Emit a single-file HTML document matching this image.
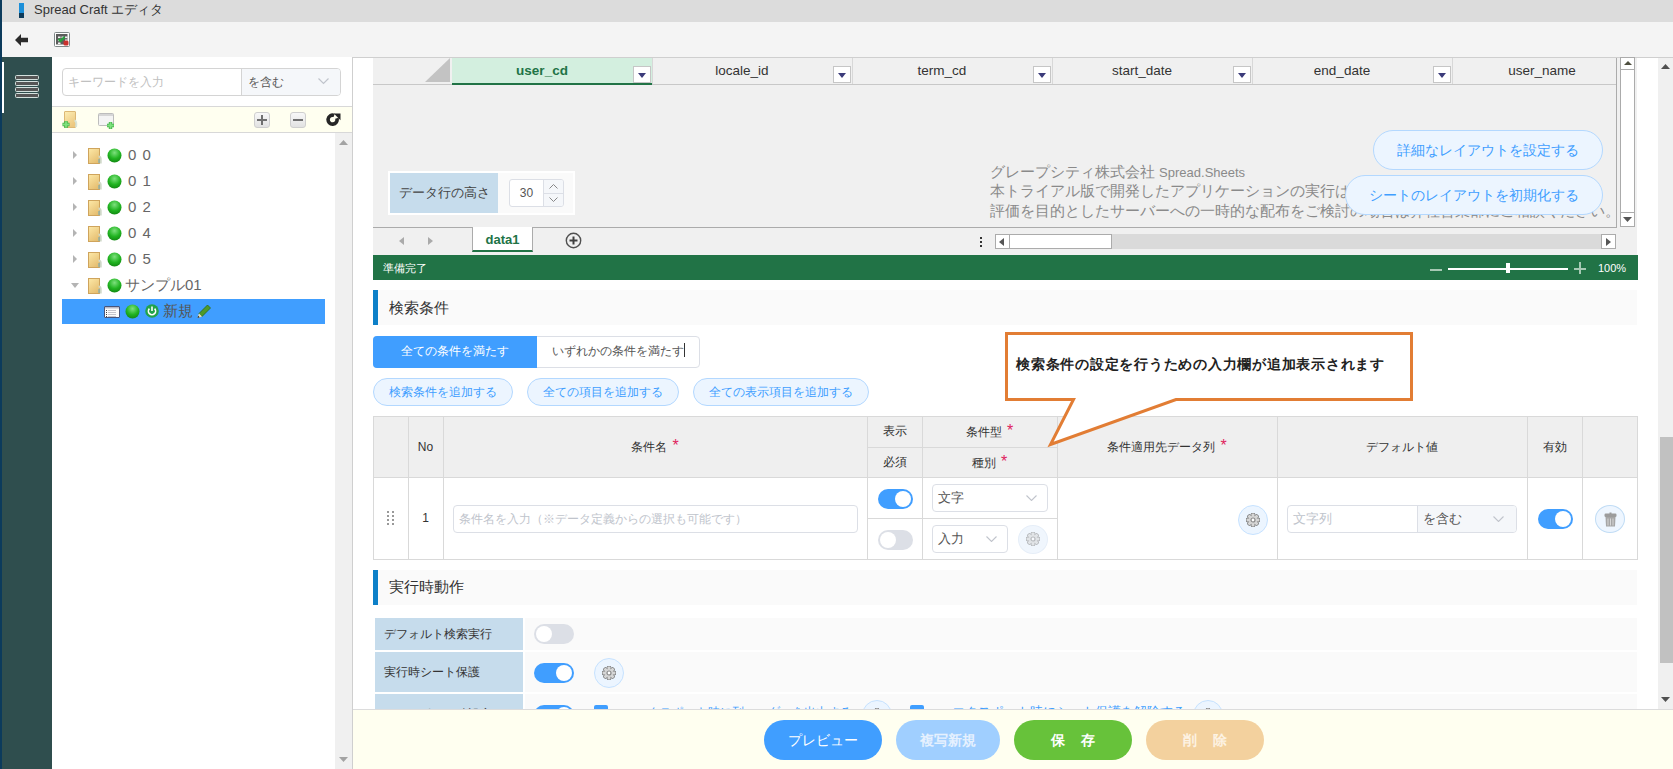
<!DOCTYPE html>
<html><head><meta charset="utf-8">
<style>
*{box-sizing:border-box;margin:0;padding:0}
html,body{width:1673px;height:769px;overflow:hidden;background:#fff;font-family:"Liberation Sans",sans-serif;color:#333}
.a{position:absolute}
.t{white-space:nowrap}
</style></head><body>
<!-- navy stripe -->
<div class="a" style="left:0;top:0;width:2px;height:769px;background:#0c3b5c"></div>
<!-- title bar -->
<div class="a" style="left:2px;top:0;width:1671px;height:22px;background:#dcdcdc"></div>
<div class="a" style="left:19px;top:3px;width:5px;height:10px;background:#1c8fd9"></div>
<div class="a" style="left:19px;top:13px;width:5px;height:5px;background:#0d3b5b"></div>
<div class="a t" style="left:34px;top:1px;font-size:13px;line-height:18px;color:#333">Spread Craft エディタ</div>
<!-- toolbar -->
<div class="a" style="left:2px;top:22px;width:1671px;height:36px;background:#f4f4f4;border-bottom:1px solid #cfcfcf"></div>

<svg class="a" style="left:15px;top:34px" width="13" height="12" viewBox="0 0 13 12"><path d="M0 6 L6 0 L6 3.8 L13 3.8 L13 8.2 L6 8.2 L6 12 Z" fill="#2b2b2b"/></svg>
<svg class="a" style="left:54px;top:32px" width="16" height="15" viewBox="0 0 16 15"><rect x="0.5" y="0.5" width="15" height="14" rx="1" fill="#fff" stroke="#7f8888"/><rect x="2" y="2" width="11.5" height="10.5" fill="#5c5c5c"/><g fill="#f2f2f2"><rect x="4" y="4.5" width="2.5" height="1.6"/><rect x="7.5" y="4.5" width="2.5" height="1.6"/><rect x="11" y="4.5" width="2.5" height="1.6"/><rect x="4" y="7.5" width="2.5" height="1.6"/><rect x="11" y="7.5" width="2.5" height="1.6"/><rect x="4" y="10.5" width="2.5" height="1.6"/></g><path d="M4.5 7 L6.5 9 L10.5 5" stroke="#22a33a" stroke-width="2.2" fill="none"/><rect x="9.5" y="8.5" width="5" height="5" rx="1.5" fill="#c9302c"/></svg>

<!-- sidebar -->
<div class="a" style="left:2px;top:57px;width:50px;height:712px;background:#2f4e4e"></div>
<div class="a" style="left:2px;top:62px;width:2px;height:51px;background:#fff"></div>

<div class="a" style="left:15px;top:75px;width:24px;height:5px;background:#555;border:1px solid #d3e0dd;border-radius:1.5px"></div>
<div class="a" style="left:15px;top:81px;width:24px;height:5px;background:#555;border:1px solid #d3e0dd;border-radius:1.5px"></div>
<div class="a" style="left:15px;top:87px;width:24px;height:5px;background:#555;border:1px solid #d3e0dd;border-radius:1.5px"></div>
<div class="a" style="left:15px;top:93px;width:24px;height:5px;background:#555;border:1px solid #d3e0dd;border-radius:1.5px"></div>
<!-- tree panel -->
<div class="a" style="left:52px;top:57px;width:301px;height:712px;background:#fff;border-right:1px solid #cfcfcf"></div>

<div class="a" style="left:62px;top:68px;width:279px;height:28px;border:1px solid #d4d4d4;border-radius:4px;background:#fff;overflow:hidden">
 <div class="a" style="left:178px;top:0;width:100px;height:26px;background:#f5f7fa;border-left:1px solid #d4d4d4"></div>
 <div class="a t" style="left:5px;top:5px;font-size:12px;line-height:16px;color:#c0c0c0">キーワードを入力</div>
 <div class="a t" style="left:185px;top:5px;font-size:12px;line-height:16px;color:#555">を含む</div>
 <svg class="a" style="left:255px;top:9px" width="11" height="7" viewBox="0 0 11 7"><path d="M0.5 0.5 L5.5 5.5 L10.5 0.5" stroke="#c0c4cc" stroke-width="1.2" fill="none"/></svg>
</div>
<div class="a" style="left:52px;top:106px;width:300px;height:27px;background:#fffff0;border-top:1px solid #d8d8d8;border-bottom:1px solid #d8d8d8"></div>
<svg class="a" style="left:62px;top:111px" width="16" height="18" viewBox="0 0 16 18"><defs><linearGradient id="fg3" x1="0" y1="0" x2="0.5" y2="1"><stop offset="0" stop-color="#fdeeb5"/><stop offset="1" stop-color="#ecc880"/></linearGradient></defs><rect x="2.5" y="0.5" width="11" height="16" rx="0.5" fill="url(#fg3)" stroke="#dcb876"/><path d="M12.5 9.5 q2.5 0.5 1.5 6.5" stroke="#d8e4d8" stroke-width="2" fill="none"/><path d="M0.5 13.5 H7.5 M4 10 V17" stroke="#3fae45" stroke-width="3.4"/><path d="M0.8 13.5 H7.2 M4 10.3 V16.7" stroke="#7ee27e" stroke-width="1.8"/></svg>
<svg class="a" style="left:98px;top:112px" width="17" height="18" viewBox="0 0 17 18"><rect x="0.5" y="1.5" width="15" height="12" rx="1" fill="#f4f4f4" stroke="#bdbdbd"/><rect x="1" y="2" width="14" height="2" fill="#d6d6d6"/><path d="M9 13.5 H16 M12.5 10 V17" stroke="#3fae45" stroke-width="3.4"/><path d="M9.3 13.5 H15.7 M12.5 10.3 V16.7" stroke="#7ee27e" stroke-width="1.8"/></svg>
<div class="a" style="left:254px;top:112px;width:16px;height:16px;border:1px solid #cfcfcf;border-radius:3px;background:linear-gradient(#f8f8f8,#e2e2e2)"></div>
<div class="a" style="left:257px;top:119px;width:10px;height:2px;background:#707070"></div>
<div class="a" style="left:261px;top:115px;width:2px;height:10px;background:#707070"></div>
<div class="a" style="left:290px;top:112px;width:16px;height:16px;border:1px solid #cfcfcf;border-radius:3px;background:linear-gradient(#f8f8f8,#e2e2e2)"></div>
<div class="a" style="left:293px;top:119px;width:10px;height:2px;background:#707070"></div>
<svg class="a" style="left:326px;top:112px" width="15" height="15" viewBox="0 0 15 15"><path d="M10.9 6.3 A4.5 4.5 0 1 1 8.2 3.4" stroke="#262626" stroke-width="3.6" fill="none"/><path d="M14.5 1.5 L14.5 8.2 L7.8 1.5 Z" fill="#262626"/></svg>
<div class="a" style="left:335px;top:133px;width:17px;height:636px;background:#f0f0f0"></div>
<svg class="a" style="left:339px;top:140px" width="9" height="5" viewBox="0 0 9 5"><path d="M0 5 L4.5 0 L9 5 Z" fill="#a3a3a3"/></svg>
<svg class="a" style="left:339px;top:757px" width="9" height="5" viewBox="0 0 9 5"><path d="M0 0 L4.5 5 L9 0 Z" fill="#a3a3a3"/></svg>
<svg class="a" style="left:72px;top:151px" width="6" height="8" viewBox="0 0 6 8"><path d="M1 0 L5 4 L1 8 Z" fill="#b4b4b4"/></svg><svg class="a" style="left:88px;top:148px" width="14" height="16" viewBox="0 0 14 16"><defs><linearGradient id="fg2" x1="0" y1="0" x2="0.6" y2="1"><stop offset="0" stop-color="#fde9a8"/><stop offset="1" stop-color="#e6bf72"/></linearGradient></defs><rect x="0.5" y="0.5" width="11" height="15" fill="url(#fg2)" stroke="#cfa45c"/><path d="M10.5 8.5 q2.5 0 2.2 3.5 v3.5" stroke="#cfd8c8" stroke-width="2" fill="none"/><path d="M11 11 v4" stroke="#6aa9bb" stroke-width="1"/></svg><svg class="a" style="left:107px;top:148px" width="15" height="15" viewBox="0 0 15 15"><defs><radialGradient id="bg1" cx="0.5" cy="0.3" r="0.7"><stop offset="0" stop-color="#7de07d"/><stop offset="0.6" stop-color="#21b421"/><stop offset="1" stop-color="#138a13"/></radialGradient></defs><circle cx="7.5" cy="7.5" r="7" fill="url(#bg1)"/></svg><div class="a t" style="left:128px;top:146px;font-size:15px;line-height:18px;color:#666;letter-spacing:1px">0 0</div><svg class="a" style="left:72px;top:177px" width="6" height="8" viewBox="0 0 6 8"><path d="M1 0 L5 4 L1 8 Z" fill="#b4b4b4"/></svg><svg class="a" style="left:88px;top:174px" width="14" height="16" viewBox="0 0 14 16"><defs><linearGradient id="fg2" x1="0" y1="0" x2="0.6" y2="1"><stop offset="0" stop-color="#fde9a8"/><stop offset="1" stop-color="#e6bf72"/></linearGradient></defs><rect x="0.5" y="0.5" width="11" height="15" fill="url(#fg2)" stroke="#cfa45c"/><path d="M10.5 8.5 q2.5 0 2.2 3.5 v3.5" stroke="#cfd8c8" stroke-width="2" fill="none"/><path d="M11 11 v4" stroke="#6aa9bb" stroke-width="1"/></svg><svg class="a" style="left:107px;top:174px" width="15" height="15" viewBox="0 0 15 15"><defs><radialGradient id="bg1" cx="0.5" cy="0.3" r="0.7"><stop offset="0" stop-color="#7de07d"/><stop offset="0.6" stop-color="#21b421"/><stop offset="1" stop-color="#138a13"/></radialGradient></defs><circle cx="7.5" cy="7.5" r="7" fill="url(#bg1)"/></svg><div class="a t" style="left:128px;top:172px;font-size:15px;line-height:18px;color:#666;letter-spacing:1px">0 1</div><svg class="a" style="left:72px;top:203px" width="6" height="8" viewBox="0 0 6 8"><path d="M1 0 L5 4 L1 8 Z" fill="#b4b4b4"/></svg><svg class="a" style="left:88px;top:200px" width="14" height="16" viewBox="0 0 14 16"><defs><linearGradient id="fg2" x1="0" y1="0" x2="0.6" y2="1"><stop offset="0" stop-color="#fde9a8"/><stop offset="1" stop-color="#e6bf72"/></linearGradient></defs><rect x="0.5" y="0.5" width="11" height="15" fill="url(#fg2)" stroke="#cfa45c"/><path d="M10.5 8.5 q2.5 0 2.2 3.5 v3.5" stroke="#cfd8c8" stroke-width="2" fill="none"/><path d="M11 11 v4" stroke="#6aa9bb" stroke-width="1"/></svg><svg class="a" style="left:107px;top:200px" width="15" height="15" viewBox="0 0 15 15"><defs><radialGradient id="bg1" cx="0.5" cy="0.3" r="0.7"><stop offset="0" stop-color="#7de07d"/><stop offset="0.6" stop-color="#21b421"/><stop offset="1" stop-color="#138a13"/></radialGradient></defs><circle cx="7.5" cy="7.5" r="7" fill="url(#bg1)"/></svg><div class="a t" style="left:128px;top:198px;font-size:15px;line-height:18px;color:#666;letter-spacing:1px">0 2</div><svg class="a" style="left:72px;top:229px" width="6" height="8" viewBox="0 0 6 8"><path d="M1 0 L5 4 L1 8 Z" fill="#b4b4b4"/></svg><svg class="a" style="left:88px;top:226px" width="14" height="16" viewBox="0 0 14 16"><defs><linearGradient id="fg2" x1="0" y1="0" x2="0.6" y2="1"><stop offset="0" stop-color="#fde9a8"/><stop offset="1" stop-color="#e6bf72"/></linearGradient></defs><rect x="0.5" y="0.5" width="11" height="15" fill="url(#fg2)" stroke="#cfa45c"/><path d="M10.5 8.5 q2.5 0 2.2 3.5 v3.5" stroke="#cfd8c8" stroke-width="2" fill="none"/><path d="M11 11 v4" stroke="#6aa9bb" stroke-width="1"/></svg><svg class="a" style="left:107px;top:226px" width="15" height="15" viewBox="0 0 15 15"><defs><radialGradient id="bg1" cx="0.5" cy="0.3" r="0.7"><stop offset="0" stop-color="#7de07d"/><stop offset="0.6" stop-color="#21b421"/><stop offset="1" stop-color="#138a13"/></radialGradient></defs><circle cx="7.5" cy="7.5" r="7" fill="url(#bg1)"/></svg><div class="a t" style="left:128px;top:224px;font-size:15px;line-height:18px;color:#666;letter-spacing:1px">0 4</div><svg class="a" style="left:72px;top:255px" width="6" height="8" viewBox="0 0 6 8"><path d="M1 0 L5 4 L1 8 Z" fill="#b4b4b4"/></svg><svg class="a" style="left:88px;top:252px" width="14" height="16" viewBox="0 0 14 16"><defs><linearGradient id="fg2" x1="0" y1="0" x2="0.6" y2="1"><stop offset="0" stop-color="#fde9a8"/><stop offset="1" stop-color="#e6bf72"/></linearGradient></defs><rect x="0.5" y="0.5" width="11" height="15" fill="url(#fg2)" stroke="#cfa45c"/><path d="M10.5 8.5 q2.5 0 2.2 3.5 v3.5" stroke="#cfd8c8" stroke-width="2" fill="none"/><path d="M11 11 v4" stroke="#6aa9bb" stroke-width="1"/></svg><svg class="a" style="left:107px;top:252px" width="15" height="15" viewBox="0 0 15 15"><defs><radialGradient id="bg1" cx="0.5" cy="0.3" r="0.7"><stop offset="0" stop-color="#7de07d"/><stop offset="0.6" stop-color="#21b421"/><stop offset="1" stop-color="#138a13"/></radialGradient></defs><circle cx="7.5" cy="7.5" r="7" fill="url(#bg1)"/></svg><div class="a t" style="left:128px;top:250px;font-size:15px;line-height:18px;color:#666;letter-spacing:1px">0 5</div><svg class="a" style="left:71px;top:283px" width="8" height="5" viewBox="0 0 8 5"><path d="M0 0 L8 0 L4 5 Z" fill="#b4b4b4"/></svg><svg class="a" style="left:88px;top:278px" width="14" height="16" viewBox="0 0 14 16"><defs><linearGradient id="fg2" x1="0" y1="0" x2="0.6" y2="1"><stop offset="0" stop-color="#fde9a8"/><stop offset="1" stop-color="#e6bf72"/></linearGradient></defs><rect x="0.5" y="0.5" width="11" height="15" fill="url(#fg2)" stroke="#cfa45c"/><path d="M10.5 8.5 q2.5 0 2.2 3.5 v3.5" stroke="#cfd8c8" stroke-width="2" fill="none"/><path d="M11 11 v4" stroke="#6aa9bb" stroke-width="1"/></svg><svg class="a" style="left:107px;top:278px" width="15" height="15" viewBox="0 0 15 15"><defs><radialGradient id="bg1" cx="0.5" cy="0.3" r="0.7"><stop offset="0" stop-color="#7de07d"/><stop offset="0.6" stop-color="#21b421"/><stop offset="1" stop-color="#138a13"/></radialGradient></defs><circle cx="7.5" cy="7.5" r="7" fill="url(#bg1)"/></svg><div class="a t" style="left:125px;top:276px;font-size:15px;line-height:18px;color:#666">サンプル01</div><div class="a" style="left:62px;top:299px;width:263px;height:25px;background:#409eff"></div><svg class="a" style="left:104px;top:306px" width="16" height="12" viewBox="0 0 16 12"><rect x="0.5" y="0.5" width="15" height="11" rx="0.5" fill="#fbfbfb" stroke="#48557a"/><rect x="1" y="1" width="14" height="1.5" fill="#b9b9c6"/><rect x="2" y="4" width="1" height="1" fill="#444"/><rect x="4" y="4" width="8" height="1" fill="#c4c4cc"/><rect x="2" y="6" width="1" height="1" fill="#444"/><rect x="4" y="6" width="8" height="1" fill="#c4c4cc"/><rect x="2" y="8" width="1" height="1" fill="#444"/><rect x="4" y="8" width="8" height="1" fill="#c4c4cc"/><rect x="2" y="10" width="1" height="1" fill="#444"/><rect x="4" y="10" width="8" height="1" fill="#c4c4cc"/></svg><svg class="a" style="left:125px;top:304px" width="15" height="15" viewBox="0 0 15 15"><defs><radialGradient id="bg1" cx="0.5" cy="0.3" r="0.7"><stop offset="0" stop-color="#7de07d"/><stop offset="0.6" stop-color="#21b421"/><stop offset="1" stop-color="#138a13"/></radialGradient></defs><circle cx="7.5" cy="7.5" r="7" fill="url(#bg1)"/></svg><svg class="a" style="left:145px;top:304px" width="14" height="14" viewBox="0 0 14 14"><circle cx="7" cy="7" r="6.8" fill="#23a34a"/><path d="M4.4 4.6 A3.6 3.6 0 1 0 9.6 4.6" stroke="#fff" stroke-width="1.6" fill="none"/><path d="M7 2.5 V7" stroke="#fff" stroke-width="1.6"/></svg><div class="a t" style="left:163px;top:302px;font-size:15px;line-height:18px;color:#555">新規</div><svg class="a" style="left:196px;top:303px" width="16" height="16" viewBox="0 0 16 16"><path d="M3 10.5 L11.5 2 L14.5 5 L6 13.5 Z" fill="#4e9a2a" stroke="#2f6a17" stroke-width="0.8"/><path d="M3 10.5 L1.5 15 L6 13.5 Z" fill="#efe0b0"/><path d="M1.5 15 L2.2 12.8 L3.7 14.3 Z" fill="#222"/></svg>
<!-- main -->

<div class="a" style="left:373px;top:58px;width:1264px;height:197px;background:#f0f0f0"></div>
<div class="a" style="left:373px;top:84px;width:1244px;height:1px;background:#c8c8c8"></div>
<svg class="a" style="left:425px;top:58px" width="25" height="24" viewBox="0 0 25 24"><path d="M25 0 L25 24 L0 24 Z" fill="#c3c3c3"/></svg>
<div class="a" style="left:452px;top:58px;width:200px;height:27px;background:#d3efdf;border-bottom:2px solid #217346"></div>
<div class="a t" style="left:452px;top:62px;width:180px;text-align:center;font-size:13.5px;line-height:18px;color:#217346;font-weight:bold">user_cd</div><div class="a" style="left:633px;top:66px;width:18px;height:17px;background:#fff;border:1px solid #c6c6c6"></div><svg class="a" style="left:638px;top:73px" width="8" height="5" viewBox="0 0 8 5"><path d="M0 0 L8 0 L4 5 Z" fill="#3b3b7a"/></svg><div class="a t" style="left:652px;top:62px;width:180px;text-align:center;font-size:13.5px;line-height:18px;color:#333">locale_id</div><div class="a" style="left:652px;top:58px;width:1px;height:26px;background:#d8d8d8"></div><div class="a" style="left:833px;top:66px;width:18px;height:17px;background:#fff;border:1px solid #c6c6c6"></div><svg class="a" style="left:838px;top:73px" width="8" height="5" viewBox="0 0 8 5"><path d="M0 0 L8 0 L4 5 Z" fill="#3b3b7a"/></svg><div class="a t" style="left:852px;top:62px;width:180px;text-align:center;font-size:13.5px;line-height:18px;color:#333">term_cd</div><div class="a" style="left:852px;top:58px;width:1px;height:26px;background:#d8d8d8"></div><div class="a" style="left:1033px;top:66px;width:18px;height:17px;background:#fff;border:1px solid #c6c6c6"></div><svg class="a" style="left:1038px;top:73px" width="8" height="5" viewBox="0 0 8 5"><path d="M0 0 L8 0 L4 5 Z" fill="#3b3b7a"/></svg><div class="a t" style="left:1052px;top:62px;width:180px;text-align:center;font-size:13.5px;line-height:18px;color:#333">start_date</div><div class="a" style="left:1052px;top:58px;width:1px;height:26px;background:#d8d8d8"></div><div class="a" style="left:1233px;top:66px;width:18px;height:17px;background:#fff;border:1px solid #c6c6c6"></div><svg class="a" style="left:1238px;top:73px" width="8" height="5" viewBox="0 0 8 5"><path d="M0 0 L8 0 L4 5 Z" fill="#3b3b7a"/></svg><div class="a t" style="left:1252px;top:62px;width:180px;text-align:center;font-size:13.5px;line-height:18px;color:#333">end_date</div><div class="a" style="left:1252px;top:58px;width:1px;height:26px;background:#d8d8d8"></div><div class="a" style="left:1433px;top:66px;width:18px;height:17px;background:#fff;border:1px solid #c6c6c6"></div><svg class="a" style="left:1438px;top:73px" width="8" height="5" viewBox="0 0 8 5"><path d="M0 0 L8 0 L4 5 Z" fill="#3b3b7a"/></svg><div class="a t" style="left:1452px;top:62px;width:180px;text-align:center;font-size:13.5px;line-height:18px;color:#333">user_name</div><div class="a" style="left:1452px;top:58px;width:1px;height:26px;background:#d8d8d8"></div>
<div class="a" style="left:1616px;top:58px;width:1px;height:170px;background:#ababab"></div>
<div class="a" style="left:1620px;top:57px;width:15px;height:170px;background:#fff;border:1px solid #ababab"></div>
<div class="a" style="left:1620px;top:69px;width:15px;height:1px;background:#ababab"></div>
<div class="a" style="left:1620px;top:212px;width:15px;height:1px;background:#ababab"></div>
<svg class="a" style="left:1624px;top:61px" width="8" height="4" viewBox="0 0 8 4"><path d="M0 4 L4 0 L8 4 Z" fill="#4f5040"/></svg>
<svg class="a" style="left:1623px;top:217px" width="9" height="5" viewBox="0 0 9 5"><path d="M0 0 L4.5 5 L9 0 Z" fill="#555"/></svg>
<div class="a t" style="left:990px;top:162px;font-size:14.7px;line-height:20px;color:#8a8a8a">グレープシティ株式会社 <span style="font-size:13px">Spread.Sheets</span></div>
<div class="a t" style="left:990px;top:181px;font-size:14.7px;line-height:20px;color:#8a8a8a">本トライアル版で開発したアプリケーションの実行は即時停止されます。</div>
<div class="a t" style="left:990px;top:201px;font-size:14.7px;line-height:20px;color:#8a8a8a">評価を目的としたサーバーへの一時的な配布をご検討の場合は弊社営業部にご相談ください。</div>
<div class="a" style="left:1373px;top:130px;width:230px;height:40px;border-radius:20px;background:#ecf5ff;border:1px solid #b3d8ff"></div>
<div class="a t" style="left:1373px;top:140px;width:230px;text-align:center;font-size:14px;line-height:20px;color:#409eff">詳細なレイアウトを設定する</div>
<div class="a" style="left:1345px;top:175px;width:258px;height:40px;border-radius:20px;background:#ecf5ff;border:1px solid #b3d8ff"></div>
<div class="a t" style="left:1345px;top:185px;width:258px;text-align:center;font-size:14px;line-height:20px;color:#409eff">シートのレイアウトを初期化する</div>
<div class="a" style="left:388px;top:171px;width:187px;height:44px;background:#fafafa;border:2px solid #fff"></div>
<div class="a" style="left:390px;top:173px;width:108px;height:40px;background:#c6dcec"></div>
<div class="a t" style="left:399px;top:184px;font-size:12.5px;line-height:18px;color:#444">データ行の高さ</div>
<div class="a" style="left:509px;top:179px;width:55px;height:28px;background:#fff;border:1px solid #dcdfe6;border-radius:3px;overflow:hidden">
 <div class="a" style="left:33px;top:0;width:21px;height:26px;background:#f5f7fa;border-left:1px solid #dcdfe6"></div>
 <div class="a" style="left:33px;top:13px;width:21px;height:1px;background:#dcdfe6"></div>
 <div class="a t" style="left:0;top:5px;width:33px;text-align:center;font-size:12px;line-height:16px;color:#555">30</div>
 <svg class="a" style="left:39px;top:4px" width="9" height="5" viewBox="0 0 9 5"><path d="M0.5 4.5 L4.5 0.5 L8.5 4.5" stroke="#888" fill="none"/></svg>
 <svg class="a" style="left:39px;top:17px" width="9" height="5" viewBox="0 0 9 5"><path d="M0.5 0.5 L4.5 4.5 L8.5 0.5" stroke="#888" fill="none"/></svg>
</div>
<div class="a" style="left:373px;top:227px;width:1244px;height:1px;background:#ababab"></div>
<svg class="a" style="left:399px;top:237px" width="5" height="8" viewBox="0 0 5 8"><path d="M5 0 L0 4 L5 8 Z" fill="#aaa"/></svg>
<svg class="a" style="left:428px;top:237px" width="5" height="8" viewBox="0 0 5 8"><path d="M0 0 L5 4 L0 8 Z" fill="#aaa"/></svg>
<div class="a" style="left:472px;top:227px;width:61px;height:25px;background:#fff;border:1px solid #ababab;border-top:none;border-bottom:2px solid #217346"></div>
<div class="a t" style="left:472px;top:231px;width:61px;text-align:center;font-size:13px;line-height:18px;color:#217346;font-weight:bold">data1</div>
<svg class="a" style="left:565px;top:232px" width="17" height="17" viewBox="0 0 17 17"><circle cx="8.5" cy="8.5" r="7.2" stroke="#505050" stroke-width="1.4" fill="none"/><path d="M4.5 8.5 H12.5 M8.5 4.5 V12.5" stroke="#404040" stroke-width="2"/></svg>
<div class="a" style="left:980px;top:237px;width:2px;height:2px;background:#333"></div>
<div class="a" style="left:980px;top:241px;width:2px;height:2px;background:#333"></div>
<div class="a" style="left:980px;top:245px;width:2px;height:2px;background:#333"></div>
<div class="a" style="left:995px;top:234px;width:621px;height:15px;background:#dadada"></div>
<div class="a" style="left:995px;top:234px;width:15px;height:15px;background:#fff;border:1px solid #ababab"></div>
<svg class="a" style="left:999px;top:238px" width="5" height="8" viewBox="0 0 5 8"><path d="M5 0 L0 4 L5 8 Z" fill="#555"/></svg>
<div class="a" style="left:1009px;top:234px;width:103px;height:15px;background:#fff;border:1px solid #ababab"></div>
<div class="a" style="left:1601px;top:234px;width:15px;height:15px;background:#fff;border:1px solid #ababab"></div>
<svg class="a" style="left:1606px;top:238px" width="5" height="8" viewBox="0 0 5 8"><path d="M0 0 L5 4 L0 8 Z" fill="#555"/></svg>
<div class="a" style="left:373px;top:255px;width:1265px;height:25px;background:#217346"></div>
<div class="a t" style="left:383px;top:260px;font-size:11px;line-height:16px;color:#fff">準備完了</div>
<div class="a" style="left:1430px;top:269px;width:12px;height:2px;background:#a6c9b4"></div>
<div class="a" style="left:1448px;top:268px;width:120px;height:2px;background:#fff"></div>
<div class="a" style="left:1506px;top:263px;width:4px;height:10px;background:#fff"></div>
<div class="a" style="left:1574px;top:268px;width:12px;height:2px;background:#a6c9b4"></div>
<div class="a" style="left:1579px;top:262px;width:2px;height:12px;background:#a6c9b4"></div>
<div class="a t" style="left:1598px;top:261px;font-size:11px;line-height:14px;color:#fff">100%</div>


<div class="a" style="left:373px;top:290px;width:1264px;height:35px;background:#fafafa"></div>
<div class="a" style="left:373px;top:290px;width:5px;height:35px;background:#0d80c8"></div>
<div class="a t" style="left:389px;top:298px;font-size:15px;line-height:20px;color:#333">検索条件</div>
<div class="a" style="left:373px;top:336px;width:327px;height:32px;border:1px solid #dcdfe6;border-radius:4px;background:#fff"></div>
<div class="a" style="left:373px;top:336px;width:164px;height:32px;border-radius:4px 0 0 4px;background:#409eff"></div>
<div class="a t" style="left:373px;top:343px;width:164px;text-align:center;font-size:12px;line-height:17px;color:#fff">全ての条件を満たす</div>
<div class="a t" style="left:537px;top:343px;width:163px;text-align:center;font-size:12px;line-height:17px;color:#555">いずれかの条件を満たす<span style="display:inline-block;width:1px;height:14px;background:#333;vertical-align:-2px"></span></div>
<div class="a" style="left:373px;top:378px;width:140px;height:28px;border-radius:14px;background:#ecf5ff;border:1px solid #b3d8ff"></div><div class="a t" style="left:373px;top:384px;width:140px;text-align:center;font-size:12px;line-height:16px;color:#409eff">検索条件を追加する</div><div class="a" style="left:527px;top:378px;width:152px;height:28px;border-radius:14px;background:#ecf5ff;border:1px solid #b3d8ff"></div><div class="a t" style="left:527px;top:384px;width:152px;text-align:center;font-size:12px;line-height:16px;color:#409eff">全ての項目を追加する</div><div class="a" style="left:693px;top:378px;width:176px;height:28px;border-radius:14px;background:#ecf5ff;border:1px solid #b3d8ff"></div><div class="a t" style="left:693px;top:384px;width:176px;text-align:center;font-size:12px;line-height:16px;color:#409eff">全ての表示項目を追加する</div><div class="a" style="left:373px;top:416px;width:1265px;height:144px;border:1px solid #d9d9d9;background:#fff"></div><div class="a" style="left:374px;top:417px;width:1263px;height:60px;background:#efefef"></div><div class="a" style="left:374px;top:477px;width:1263px;height:1px;background:#d9d9d9"></div><div class="a" style="left:408px;top:417px;width:1px;height:142px;background:#d9d9d9"></div><div class="a" style="left:443px;top:417px;width:1px;height:142px;background:#d9d9d9"></div><div class="a" style="left:867px;top:417px;width:1px;height:142px;background:#d9d9d9"></div><div class="a" style="left:922px;top:417px;width:1px;height:142px;background:#d9d9d9"></div><div class="a" style="left:1057px;top:417px;width:1px;height:142px;background:#d9d9d9"></div><div class="a" style="left:1277px;top:417px;width:1px;height:142px;background:#d9d9d9"></div><div class="a" style="left:1527px;top:417px;width:1px;height:142px;background:#d9d9d9"></div><div class="a" style="left:1582px;top:417px;width:1px;height:142px;background:#d9d9d9"></div><div class="a" style="left:868px;top:447px;width:189px;height:1px;background:#d9d9d9"></div><div class="a" style="left:868px;top:518px;width:189px;height:1px;background:#d9d9d9"></div><div class="a t" style="left:408px;top:438px;width:35px;text-align:center;font-size:12px;line-height:18px;color:#333">No</div><div class="a t" style="left:443px;top:437px;width:424px;text-align:center;font-size:12px;line-height:18px;color:#333">条件名<span style="color:#e0245e;font-size:16px;position:relative;top:0px;margin-left:5px">*</span></div><div class="a t" style="left:867px;top:422px;width:55px;text-align:center;font-size:12px;line-height:18px;color:#333">表示</div><div class="a t" style="left:867px;top:453px;width:55px;text-align:center;font-size:12px;line-height:18px;color:#333">必須</div><div class="a t" style="left:922px;top:422px;width:135px;text-align:center;font-size:12px;line-height:18px;color:#333">条件型<span style="color:#e0245e;font-size:16px;position:relative;top:0px;margin-left:5px">*</span></div><div class="a t" style="left:922px;top:453px;width:135px;text-align:center;font-size:12px;line-height:18px;color:#333">種別<span style="color:#e0245e;font-size:16px;position:relative;top:0px;margin-left:5px">*</span></div><div class="a t" style="left:1057px;top:437px;width:220px;text-align:center;font-size:12px;line-height:18px;color:#333">条件適用先データ列<span style="color:#e0245e;font-size:16px;position:relative;top:0px;margin-left:5px">*</span></div><div class="a t" style="left:1277px;top:438px;width:250px;text-align:center;font-size:12px;line-height:18px;color:#333">デフォルト値</div><div class="a t" style="left:1527px;top:438px;width:55px;text-align:center;font-size:12px;line-height:18px;color:#333">有効</div><svg class="a" style="left:387px;top:511px" width="8" height="14" viewBox="0 0 8 14"><g fill="#999"><rect x="0" y="0" width="2" height="2"/><rect x="5" y="0" width="2" height="2"/><rect x="0" y="4" width="2" height="2"/><rect x="5" y="4" width="2" height="2"/><rect x="0" y="8" width="2" height="2"/><rect x="5" y="8" width="2" height="2"/><rect x="0" y="12" width="2" height="2"/><rect x="5" y="12" width="2" height="2"/></g></svg><div class="a t" style="left:408px;top:509px;width:35px;text-align:center;font-size:12px;line-height:18px;color:#333">1</div><div class="a" style="left:453px;top:505px;width:405px;height:28px;border:1px solid #dcdfe6;border-radius:4px;background:#fff"></div><div class="a t" style="left:459px;top:511px;font-size:12px;line-height:16px;color:#c0c4cc">条件名を入力（※データ定義からの選択も可能です）</div><div class="a" style="left:878px;top:489px;width:35px;height:20px;border-radius:10px;background:#409eff"></div><div class="a" style="left:895px;top:491px;width:16px;height:16px;border-radius:50%;background:#fff"></div><div class="a" style="left:932px;top:484px;width:116px;height:28px;border:1px solid #dcdfe6;border-radius:4px;background:#fff"></div><div class="a t" style="left:938px;top:490px;font-size:13px;line-height:16px;color:#555">文字</div><svg class="a" style="left:1026px;top:495px" width="11" height="6" viewBox="0 0 11 6"><path d="M0.5 0.5 L5.5 5.5 L10.5 0.5" stroke="#c0c4cc" stroke-width="1.1" fill="none"/></svg><div class="a" style="left:878px;top:530px;width:35px;height:20px;border-radius:10px;background:#dcdfe6"></div><div class="a" style="left:880px;top:532px;width:16px;height:16px;border-radius:50%;background:#fff"></div><div class="a" style="left:932px;top:525px;width:76px;height:28px;border:1px solid #dcdfe6;border-radius:4px;background:#fff"></div><div class="a t" style="left:938px;top:531px;font-size:13px;line-height:16px;color:#555">入力</div><svg class="a" style="left:986px;top:536px" width="11" height="6" viewBox="0 0 11 6"><path d="M0.5 0.5 L5.5 5.5 L10.5 0.5" stroke="#c0c4cc" stroke-width="1.1" fill="none"/></svg><div class="a" style="left:1018px;top:525px;width:30px;height:29px;border-radius:50%;background:#f0f6fd;border:1px solid #e6eef8"></div><svg class="a" style="left:1026px;top:532px;opacity:0.55" width="14" height="14" viewBox="0 0 14 14"><g><rect x="5.5" y="0.6" width="3" height="12.8" rx="0.7" transform="rotate(0 7 7)" fill="#7a7a7a" stroke="#7a7a7a" stroke-width="1.4"/><rect x="5.5" y="0.6" width="3" height="12.8" rx="0.7" transform="rotate(45 7 7)" fill="#7a7a7a" stroke="#7a7a7a" stroke-width="1.4"/><rect x="5.5" y="0.6" width="3" height="12.8" rx="0.7" transform="rotate(90 7 7)" fill="#7a7a7a" stroke="#7a7a7a" stroke-width="1.4"/><rect x="5.5" y="0.6" width="3" height="12.8" rx="0.7" transform="rotate(135 7 7)" fill="#7a7a7a" stroke="#7a7a7a" stroke-width="1.4"/><circle cx="7" cy="7" r="3.8" fill="#7a7a7a" stroke="#7a7a7a" stroke-width="1.4"/></g><g><rect x="5.5" y="0.6" width="3" height="12.8" rx="0.7" transform="rotate(0 7 7)" fill="#d6d6d6"/><rect x="5.5" y="0.6" width="3" height="12.8" rx="0.7" transform="rotate(45 7 7)" fill="#d6d6d6"/><rect x="5.5" y="0.6" width="3" height="12.8" rx="0.7" transform="rotate(90 7 7)" fill="#d6d6d6"/><rect x="5.5" y="0.6" width="3" height="12.8" rx="0.7" transform="rotate(135 7 7)" fill="#d6d6d6"/><circle cx="7" cy="7" r="3.8" fill="#d6d6d6"/></g><circle cx="7" cy="7" r="2" fill="#fff" stroke="#8a8a8a" stroke-width="1.2"/></svg><div class="a" style="left:1238px;top:505px;width:30px;height:30px;border-radius:50%;background:#ecf5ff;border:1px solid #c6e2ff"></div><svg class="a" style="left:1246px;top:513px" width="14" height="14" viewBox="0 0 14 14"><g><rect x="5.5" y="0.6" width="3" height="12.8" rx="0.7" transform="rotate(0 7 7)" fill="#7a7a7a" stroke="#7a7a7a" stroke-width="1.4"/><rect x="5.5" y="0.6" width="3" height="12.8" rx="0.7" transform="rotate(45 7 7)" fill="#7a7a7a" stroke="#7a7a7a" stroke-width="1.4"/><rect x="5.5" y="0.6" width="3" height="12.8" rx="0.7" transform="rotate(90 7 7)" fill="#7a7a7a" stroke="#7a7a7a" stroke-width="1.4"/><rect x="5.5" y="0.6" width="3" height="12.8" rx="0.7" transform="rotate(135 7 7)" fill="#7a7a7a" stroke="#7a7a7a" stroke-width="1.4"/><circle cx="7" cy="7" r="3.8" fill="#7a7a7a" stroke="#7a7a7a" stroke-width="1.4"/></g><g><rect x="5.5" y="0.6" width="3" height="12.8" rx="0.7" transform="rotate(0 7 7)" fill="#d6d6d6"/><rect x="5.5" y="0.6" width="3" height="12.8" rx="0.7" transform="rotate(45 7 7)" fill="#d6d6d6"/><rect x="5.5" y="0.6" width="3" height="12.8" rx="0.7" transform="rotate(90 7 7)" fill="#d6d6d6"/><rect x="5.5" y="0.6" width="3" height="12.8" rx="0.7" transform="rotate(135 7 7)" fill="#d6d6d6"/><circle cx="7" cy="7" r="3.8" fill="#d6d6d6"/></g><circle cx="7" cy="7" r="2" fill="#fff" stroke="#8a8a8a" stroke-width="1.2"/></svg><div class="a" style="left:1287px;top:505px;width:230px;height:28px;border:1px solid #dcdfe6;border-radius:4px;background:#fff;overflow:hidden"><div class="a" style="left:129px;top:0;width:100px;height:26px;background:#f5f7fa;border-left:1px solid #dcdfe6"></div></div><div class="a t" style="left:1293px;top:511px;font-size:13px;line-height:16px;color:#c0c4cc">文字列</div><div class="a t" style="left:1423px;top:511px;font-size:13px;line-height:16px;color:#555">を含む</div><svg class="a" style="left:1493px;top:516px" width="11" height="6" viewBox="0 0 11 6"><path d="M0.5 0.5 L5.5 5.5 L10.5 0.5" stroke="#c0c4cc" stroke-width="1.1" fill="none"/></svg><div class="a" style="left:1538px;top:509px;width:35px;height:20px;border-radius:10px;background:#409eff"></div><div class="a" style="left:1555px;top:511px;width:16px;height:16px;border-radius:50%;background:#fff"></div><div class="a" style="left:1595px;top:505px;width:30px;height:28px;border-radius:50%;background:#eef6ff;border:1px solid #c0dcf5"></div><svg class="a" style="left:1604px;top:512px" width="13" height="15" viewBox="0 0 13 15"><rect x="5.5" y="0.5" width="2" height="2" fill="#999"/><rect x="0.5" y="1.5" width="12" height="3.5" rx="1.2" fill="#9c9c9c"/><path d="M1.5 5 H11.5 L11 14.5 H2 Z" fill="#a6a6a6"/><path d="M4 6.5 V13.5 M6.5 6.5 V13.5 M9 6.5 V13.5" stroke="#dcdcdc" stroke-width="0.9"/></svg><svg class="a" style="left:1000px;top:328px" width="420" height="125" viewBox="1000 328 420 125"><path d="M1006.5 333.5 H1411.5 V399.5 H1176 L1050.5 444.5 L1073.5 399.5 H1006.5 Z" fill="#fff" stroke="#e27d34" stroke-width="3" stroke-linejoin="miter"/></svg><div class="a t" style="left:1016px;top:355px;font-size:14px;line-height:18px;color:#222;font-weight:bold;letter-spacing:0.75px">検索条件の設定を行うための入力欄が追加表示されます</div>

<div class="a" style="left:373px;top:570px;width:1264px;height:35px;background:#fafafa"></div>
<div class="a" style="left:373px;top:570px;width:5px;height:35px;background:#0d80c8"></div>
<div class="a t" style="left:389px;top:577px;font-size:15px;line-height:20px;color:#333">実行時動作</div>
<div class="a" style="left:353px;top:612px;width:1305px;height:98px;overflow:hidden">
<div class="a" style="left:22px;top:6px;width:148px;height:32px;background:#c6dcec"></div><div class="a" style="left:172px;top:6px;width:1112px;height:32px;background:#fafafa"></div><div class="a t" style="left:31px;top:13px;font-size:12px;line-height:18px;color:#333">デフォルト検索実行</div><div class="a" style="left:22px;top:40px;width:148px;height:40px;background:#c6dcec"></div><div class="a" style="left:172px;top:40px;width:1112px;height:40px;background:#fafafa"></div><div class="a t" style="left:31px;top:51px;font-size:12px;line-height:18px;color:#333">実行時シート保護</div><div class="a" style="left:22px;top:82px;width:148px;height:40px;background:#c6dcec"></div><div class="a" style="left:172px;top:82px;width:1112px;height:40px;background:#fafafa"></div><div class="a t" style="left:31px;top:93px;font-size:12px;line-height:18px;color:#333">エクスポート時設定</div><div class="a" style="left:181px;top:12px;width:40px;height:20px;border-radius:10px;background:#dcdfe6"></div><div class="a" style="left:183px;top:14px;width:16px;height:16px;border-radius:50%;background:#fff"></div><div class="a" style="left:181px;top:51px;width:40px;height:20px;border-radius:10px;background:#409eff"></div><div class="a" style="left:203px;top:53px;width:16px;height:16px;border-radius:50%;background:#fff"></div><div class="a" style="left:241px;top:46px;width:30px;height:30px;border-radius:50%;background:#ecf5ff;border:1px solid #c6e2ff"></div><svg class="a" style="left:249px;top:54px" width="14" height="14" viewBox="0 0 14 14"><g><rect x="5.5" y="0.6" width="3" height="12.8" rx="0.7" transform="rotate(0 7 7)" fill="#7a7a7a" stroke="#7a7a7a" stroke-width="1.4"/><rect x="5.5" y="0.6" width="3" height="12.8" rx="0.7" transform="rotate(45 7 7)" fill="#7a7a7a" stroke="#7a7a7a" stroke-width="1.4"/><rect x="5.5" y="0.6" width="3" height="12.8" rx="0.7" transform="rotate(90 7 7)" fill="#7a7a7a" stroke="#7a7a7a" stroke-width="1.4"/><rect x="5.5" y="0.6" width="3" height="12.8" rx="0.7" transform="rotate(135 7 7)" fill="#7a7a7a" stroke="#7a7a7a" stroke-width="1.4"/><circle cx="7" cy="7" r="3.8" fill="#7a7a7a" stroke="#7a7a7a" stroke-width="1.4"/></g><g><rect x="5.5" y="0.6" width="3" height="12.8" rx="0.7" transform="rotate(0 7 7)" fill="#d6d6d6"/><rect x="5.5" y="0.6" width="3" height="12.8" rx="0.7" transform="rotate(45 7 7)" fill="#d6d6d6"/><rect x="5.5" y="0.6" width="3" height="12.8" rx="0.7" transform="rotate(90 7 7)" fill="#d6d6d6"/><rect x="5.5" y="0.6" width="3" height="12.8" rx="0.7" transform="rotate(135 7 7)" fill="#d6d6d6"/><circle cx="7" cy="7" r="3.8" fill="#d6d6d6"/></g><circle cx="7" cy="7" r="2" fill="#fff" stroke="#8a8a8a" stroke-width="1.2"/></svg><div class="a" style="left:181px;top:93px;width:40px;height:20px;border-radius:10px;background:#409eff"></div><div class="a" style="left:203px;top:95px;width:16px;height:16px;border-radius:50%;background:#fff"></div><div class="a" style="left:241px;top:93px;width:14px;height:14px;border-radius:2px;background:#409eff"></div><div class="a t" style="left:283px;top:91px;font-size:11.9px;line-height:18px;color:#409eff">エクスポート時に列ヘッダーを出力する</div><div class="a" style="left:509px;top:88px;width:30px;height:30px;border-radius:50%;background:#ecf5ff;border:1px solid #c6e2ff"></div><svg class="a" style="left:517px;top:96px" width="14" height="14" viewBox="0 0 14 14"><g><rect x="5.5" y="0.6" width="3" height="12.8" rx="0.7" transform="rotate(0 7 7)" fill="#7a7a7a" stroke="#7a7a7a" stroke-width="1.4"/><rect x="5.5" y="0.6" width="3" height="12.8" rx="0.7" transform="rotate(45 7 7)" fill="#7a7a7a" stroke="#7a7a7a" stroke-width="1.4"/><rect x="5.5" y="0.6" width="3" height="12.8" rx="0.7" transform="rotate(90 7 7)" fill="#7a7a7a" stroke="#7a7a7a" stroke-width="1.4"/><rect x="5.5" y="0.6" width="3" height="12.8" rx="0.7" transform="rotate(135 7 7)" fill="#7a7a7a" stroke="#7a7a7a" stroke-width="1.4"/><circle cx="7" cy="7" r="3.8" fill="#7a7a7a" stroke="#7a7a7a" stroke-width="1.4"/></g><g><rect x="5.5" y="0.6" width="3" height="12.8" rx="0.7" transform="rotate(0 7 7)" fill="#d6d6d6"/><rect x="5.5" y="0.6" width="3" height="12.8" rx="0.7" transform="rotate(45 7 7)" fill="#d6d6d6"/><rect x="5.5" y="0.6" width="3" height="12.8" rx="0.7" transform="rotate(90 7 7)" fill="#d6d6d6"/><rect x="5.5" y="0.6" width="3" height="12.8" rx="0.7" transform="rotate(135 7 7)" fill="#d6d6d6"/><circle cx="7" cy="7" r="3.8" fill="#d6d6d6"/></g><circle cx="7" cy="7" r="2" fill="#fff" stroke="#8a8a8a" stroke-width="1.2"/></svg><div class="a" style="left:557px;top:93px;width:14px;height:14px;border-radius:2px;background:#409eff"></div><div class="a t" style="left:599px;top:91px;font-size:12.5px;line-height:18px;color:#409eff">エクスポート時にシート保護を解除する</div><div class="a" style="left:840px;top:88px;width:30px;height:30px;border-radius:50%;background:#ecf5ff;border:1px solid #c6e2ff"></div><svg class="a" style="left:848px;top:96px" width="14" height="14" viewBox="0 0 14 14"><g><rect x="5.5" y="0.6" width="3" height="12.8" rx="0.7" transform="rotate(0 7 7)" fill="#7a7a7a" stroke="#7a7a7a" stroke-width="1.4"/><rect x="5.5" y="0.6" width="3" height="12.8" rx="0.7" transform="rotate(45 7 7)" fill="#7a7a7a" stroke="#7a7a7a" stroke-width="1.4"/><rect x="5.5" y="0.6" width="3" height="12.8" rx="0.7" transform="rotate(90 7 7)" fill="#7a7a7a" stroke="#7a7a7a" stroke-width="1.4"/><rect x="5.5" y="0.6" width="3" height="12.8" rx="0.7" transform="rotate(135 7 7)" fill="#7a7a7a" stroke="#7a7a7a" stroke-width="1.4"/><circle cx="7" cy="7" r="3.8" fill="#7a7a7a" stroke="#7a7a7a" stroke-width="1.4"/></g><g><rect x="5.5" y="0.6" width="3" height="12.8" rx="0.7" transform="rotate(0 7 7)" fill="#d6d6d6"/><rect x="5.5" y="0.6" width="3" height="12.8" rx="0.7" transform="rotate(45 7 7)" fill="#d6d6d6"/><rect x="5.5" y="0.6" width="3" height="12.8" rx="0.7" transform="rotate(90 7 7)" fill="#d6d6d6"/><rect x="5.5" y="0.6" width="3" height="12.8" rx="0.7" transform="rotate(135 7 7)" fill="#d6d6d6"/><circle cx="7" cy="7" r="3.8" fill="#d6d6d6"/></g><circle cx="7" cy="7" r="2" fill="#fff" stroke="#8a8a8a" stroke-width="1.2"/></svg></div>
<!-- page scrollbar -->
<div class="a" style="left:1658px;top:58px;width:15px;height:651px;background:#f0f0f0"></div>
<div class="a" style="left:1660px;top:437px;width:13px;height:226px;background:#c1c1c1"></div><svg class="a" style="left:1661px;top:64px" width="9" height="5" viewBox="0 0 9 5"><path d="M0 5 L4.5 0 L9 5 Z" fill="#505050"/></svg><svg class="a" style="left:1661px;top:697px" width="9" height="5" viewBox="0 0 9 5"><path d="M0 0 L4.5 5 L9 0 Z" fill="#505050"/></svg>
<!-- footer -->
<div class="a" style="left:353px;top:709px;width:1320px;height:60px;background:#fffff0;border-top:1px solid #dcdcdc"></div><div class="a" style="left:764px;top:720px;width:118px;height:40px;border-radius:20px;background:#409eff"></div><div class="a t" style="left:764px;top:730px;width:118px;text-align:center;font-size:14px;line-height:20px;color:#fff;letter-spacing:0">プレビュー</div><div class="a" style="left:896px;top:720px;width:104px;height:40px;border-radius:20px;background:#a0cfff"></div><div class="a t" style="left:896px;top:730px;width:104px;text-align:center;font-size:14px;line-height:20px;color:#e6f1fe;letter-spacing:0;font-weight:bold">複写新規</div><div class="a" style="left:1014px;top:720px;width:118px;height:40px;border-radius:20px;background:#67c23a"></div><div class="a t" style="left:1014px;top:730px;width:118px;text-align:center;font-size:14px;line-height:20px;color:#fff;letter-spacing:1px;font-weight:bold">保　存</div><div class="a" style="left:1146px;top:720px;width:118px;height:40px;border-radius:20px;background:#f3d19e"></div><div class="a t" style="left:1146px;top:730px;width:118px;text-align:center;font-size:14px;line-height:20px;color:#fdf3e4;letter-spacing:1px;font-weight:bold">削　除</div>
</body></html>
